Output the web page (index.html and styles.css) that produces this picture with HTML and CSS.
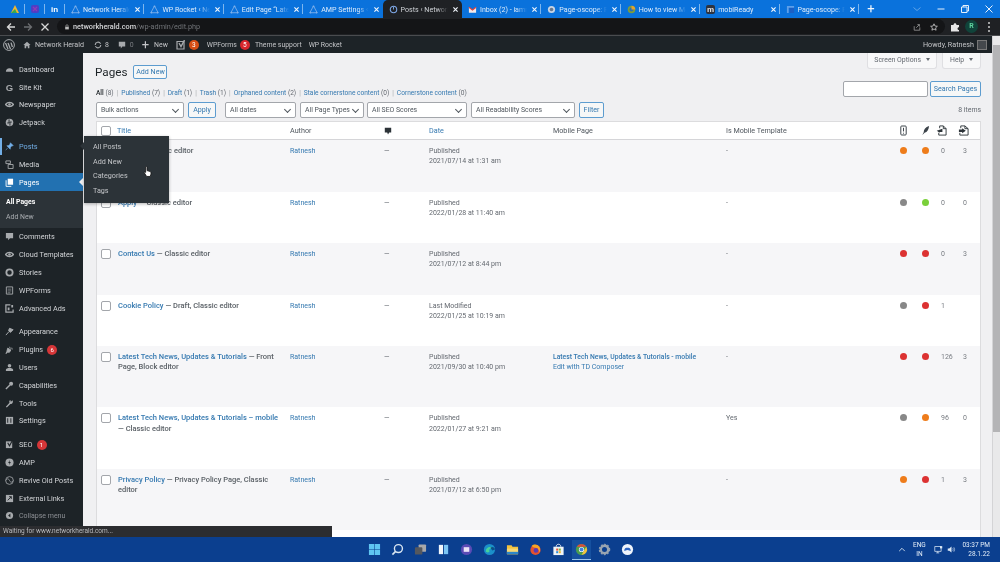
FILE: index.html
```html
<!DOCTYPE html>
<html lang="en">
<head>
<meta charset="utf-8">
<title>Pages</title>
<link rel="stylesheet" href="styles.css">
</head>
<body>
<svg class="defs" width="0" height="0" aria-hidden="true">
  <symbol id="tri" viewBox="0 0 10 10"><path d="M5 1 9 8.6H1Z" fill="none" stroke="currentColor" stroke-width="1"/><circle cx="5" cy="1.5" r="1" fill="currentColor"/><circle cx="1.5" cy="8.4" r="1" fill="currentColor"/><circle cx="8.5" cy="8.4" r="1" fill="currentColor"/></symbol>
  <symbol id="x" viewBox="0 0 10 10"><path d="M2 2 8 8M8 2 2 8" stroke="currentColor" stroke-width="1.6" fill="none"/></symbol>
</svg>
<div class="screen">
  <div class="tabs">
    <div class="pin"><svg viewBox="0 0 10 10"><path d="M5 1 9 9H1Z" fill="#f2b632"/><path d="M1 9 5 5 7 9Z" fill="#34a853"/></svg></div>
    <div class="pin"><svg viewBox="0 0 10 10"><rect x="1" y="1" width="8" height="8" rx="2" fill="#4d3fc4"/><path d="M3 3 7 7M7 3 3 7" stroke="#8e3bb8" stroke-width="1.4"/></svg></div>
    <div class="pin"><span class="in">in</span></div>
    <div class="tab"><svg class="fav"><use href="#tri"/></svg><span class="tab-t">Network Herald</span><svg class="cl"><use href="#x"/></svg></div>
    <div class="tab"><svg class="fav"><use href="#tri"/></svg><span class="tab-t">WP Rocket ‹ Net</span><svg class="cl"><use href="#x"/></svg></div>
    <div class="tab"><svg class="fav"><use href="#tri"/></svg><span class="tab-t">Edit Page “Late</span><svg class="cl"><use href="#x"/></svg></div>
    <div class="tab no-sep"><svg class="fav"><use href="#tri"/></svg><span class="tab-t">AMP Settings ‹</span><svg class="cl"><use href="#x"/></svg></div>
    <div class="tab active"><svg class="fav" viewBox="0 0 10 10"><circle cx="5" cy="5" r="3.6" fill="none" stroke="#7fa9e8" stroke-width="1.2"/><path d="M5 2V5" stroke="#7fa9e8"/></svg><span class="tab-t">Posts ‹ Network</span><svg class="cl"><use href="#x"/></svg></div>
    <div class="tab"><svg class="fav" viewBox="0 0 10 10"><path d="M1 2.5V8.5H9V2.5L5 5.5Z" fill="#f3e9e9"/><path d="M1 2.5 5 5.5 9 2.5" fill="none" stroke="#e0433a" stroke-width="1.3"/></svg><span class="tab-t">Inbox (2) - iamr</span><svg class="cl"><use href="#x"/></svg></div>
    <div class="tab"><svg class="fav" viewBox="0 0 10 10"><circle cx="5" cy="5" r="4" fill="#c8d4e4"/><circle cx="5" cy="5" r="2" fill="#66788f"/></svg><span class="tab-t">Page-oscope: Pr</span><svg class="cl"><use href="#x"/></svg></div>
    <div class="tab"><svg class="fav" viewBox="0 0 10 10"><circle cx="5" cy="5" r="4.2" fill="#7d9c3c"/><circle cx="5" cy="5" r="2.2" fill="#2f6fb3"/><path d="M5 .8A4.2 4.2 0 0 1 9.2 5H5Z" fill="#e2a32f"/></svg><span class="tab-t">How to view Mo</span><svg class="cl"><use href="#x"/></svg></div>
    <div class="tab"><span class="fav m-fav">m</span><span class="tab-t plain">mobiReady</span><svg class="cl"><use href="#x"/></svg></div>
    <div class="tab"><svg class="fav" viewBox="0 0 10 10"><path d="M1 1H9V9H4V4H1Z" fill="#1b5fc4"/><path d="M1 1H9V3H3V9H1Z" fill="#5ea0ea"/></svg><span class="tab-t">Page-oscope: Pr</span><svg class="cl"><use href="#x"/></svg></div>
    <span class="plus">+</span>
    <div class="win">
      <svg viewBox="0 0 10 10" class="dim"><path d="M1.5 3.5 5 6.5 8.5 3.5" fill="none" stroke="currentColor"/></svg>
      <svg viewBox="0 0 10 10"><path d="M1.5 5H8.5" stroke="currentColor"/></svg>
      <svg viewBox="0 0 10 10"><path d="M1.5 3H7V8.5H1.5ZM3 3V1.5H8.5V7H7" fill="none" stroke="currentColor"/></svg>
      <svg viewBox="0 0 10 10"><path d="M1.5 1.5 8.5 8.5M8.5 1.5 1.5 8.5" stroke="currentColor"/></svg>
    </div>
  </div>

  <div class="toolbar">
    <svg class="nav" viewBox="0 0 10 10"><path d="M9 5H1.5M5 1.5 1.5 5 5 8.5" fill="none" stroke="#d8d8d8" stroke-width="1.3"/></svg>
    <svg class="nav" viewBox="0 0 10 10"><path d="M1 5H8.5M5 1.5 8.5 5 5 8.5" fill="none" stroke="#6b6d70" stroke-width="1.3"/></svg>
    <svg class="nav" viewBox="0 0 10 10"><path d="M1.5 1.5 8.5 8.5M8.5 1.5 1.5 8.5" stroke="#d8d8d8" stroke-width="1.3"/></svg>
    <div class="omni">
      <svg class="lock" viewBox="0 0 10 10"><rect x="2" y="4.5" width="6" height="4.5" fill="#bbb"/><path d="M3.2 4.5V3a1.8 1.8 0 0 1 3.6 0V4.5" fill="none" stroke="#bbb"/></svg>
      <span class="host">networkherald.com</span><span class="path">/wp-admin/edit.php</span>
      <span class="grow"></span>
      <svg class="omni-i" viewBox="0 0 10 10"><path d="M1.5 4V9H8.5V5.5M4 6 8 2M8 2H5.5M8 2V4.5" fill="none" stroke="#9a9a9a"/></svg>
      <svg class="omni-i" viewBox="0 0 10 10"><path d="M5 1 6.2 3.8 9.2 4.1 7 6.1 7.6 9 5 7.5 2.4 9 3 6.1.8 4.1 3.8 3.8Z" fill="none" stroke="#cfcfcf"/></svg>
    </div>
    <svg class="puzzle" viewBox="0 0 10 10"><path d="M1 3H3.5C3.5 .8 6.5 .8 6.5 3H9V5.2C7 5.2 7 8 9 8V9.5H1Z" fill="#e6e6e6"/></svg>
    <span class="avatar">R</span>
    <svg class="dots" viewBox="0 0 4 12"><circle cx="2" cy="2" r="1" fill="#ccc"/><circle cx="2" cy="6" r="1" fill="#ccc"/><circle cx="2" cy="10" r="1" fill="#ccc"/></svg>
  </div>

  <div class="window">
    <div class="page">
      <div class="adminbar">
        <svg class="ab-logo" viewBox="0 0 12 12"><circle cx="6" cy="6" r="5.4" fill="none" stroke="#a7aaad" stroke-width="1"/><path d="M2.5 4 5 10M5 4 7.5 10M8 3.6 9.4 8" stroke="#a7aaad" stroke-width="1.3" fill="none"/></svg>
        <svg class="ab-i" viewBox="0 0 10 10"><path d="M5 1 9.5 5H8V9H6V6.5H4V9H2V5H.5Z" fill="#a7aaad"/></svg>
        <span class="ab-t site">Network Herald</span>
        <svg class="ab-i upd" viewBox="0 0 10 10"><path d="M1.5 5A3.5 3.5 0 0 1 8.2 3.6M8.5 5A3.5 3.5 0 0 1 1.8 6.4" fill="none" stroke="#a7aaad" stroke-width="1.4"/></svg>
        <span class="ab-t num">8</span>
        <svg class="ab-i cm" viewBox="0 0 10 10"><path d="M1 1H9V7H5.5L3.5 9.3V7H1Z" fill="#a7aaad"/></svg>
        <span class="ab-t num2 dim-t">0</span>
        <span class="ab-plus">+</span>
        <span class="ab-t new">New</span>
        <svg class="ab-i yoast" viewBox="0 0 10 10"><path d="M1 1.5H8V9H1Z" fill="none" stroke="#a7aaad" stroke-width="1.2"/><path d="M3 3 5 6.5 8.5 0" fill="none" stroke="#a7aaad" stroke-width="1.4"/></svg>
        <span class="badge orange">3</span>
        <span class="ab-t wpf">WPForms</span>
        <span class="badge red">5</span>
        <span class="ab-t theme">Theme support</span>
        <span class="ab-t rocket">WP Rocket</span>
        <span class="grow"></span>
        <span class="ab-t howdy">Howdy, Ratnesh</span>
        <span class="ab-av"></span>
      </div>

      <div class="main">
        <nav class="side">
          <a class="mi"><svg viewBox="0 0 10 10"><path d="M1 7.500A4 4 0 1 1 9 7.500Z" fill="#a7aaad"/></svg>Dashboard</a>
          <a class="mi"><span class="gl">G</span>Site Kit</a>
          <a class="mi"><svg viewBox="0 0 10 10"><path d="M.5 5C3 2 7 2 9.500 5 7 8 3 8 .5 5Z" fill="none" stroke="#a7aaad" stroke-width="1.400"/><circle cx="5" cy="5" r="1.400" fill="#a7aaad"/></svg>Newspaper</a>
          <a class="mi"><svg viewBox="0 0 10 10"><circle cx="5" cy="5" r="4.200" fill="#a7aaad"/><path d="M4.500 1.500V5.500H2.500M5.500 8.500V4.500H7.500" stroke="#1d2327" fill="none"/></svg>Jetpack</a>

          <a class="mi sep cur"><svg viewBox="0 0 10 10"><path d="M6 .8 9.200 4 7.500 4.500 6 6 5.800 8 2 4.200 4 4 5.500 2.500ZM3 6.500 .8 9.200" fill="#72aee6" stroke="#72aee6" stroke-width=".6"/></svg>Posts</a>
          <a class="mi"><svg viewBox="0 0 10 10"><path d="M1 1H6V4H1ZM3.500 5H9V9.500H3.500Z" fill="none" stroke="#a7aaad"/></svg>Media</a>
          <a class="mi on"><svg viewBox="0 0 10 10"><path d="M3 .8H9V7.500H3Z" fill="#fff"/><path d="M1.200 2.500V9.300H7" fill="none" stroke="#fff"/></svg>Pages</a>
          <div class="sub"><a class="sub-on">All Pages</a><a>Add New</a></div>
          <a class="mi"><svg viewBox="0 0 10 10"><path d="M1 1H9V7H5.500L3.500 9.300V7H1Z" fill="#a7aaad"/></svg>Comments</a>
          <a class="mi"><svg viewBox="0 0 10 10"><path d="M.5 5C3 2 7 2 9.500 5 7 8 3 8 .5 5Z" fill="none" stroke="#a7aaad" stroke-width="1.400"/><circle cx="5" cy="5" r="1.400" fill="#a7aaad"/></svg>Cloud Templates</a>
          <a class="mi"><svg viewBox="0 0 10 10"><circle cx="5" cy="5" r="3.500" fill="none" stroke="#a7aaad" stroke-width="2"/></svg>Stories</a>
          <a class="mi"><svg viewBox="0 0 10 10"><path d="M1.500 1H8.500V9H1.500Z" fill="none" stroke="#a7aaad"/><path d="M3 3.500H7M3 5.500H7M3 7.500H6" stroke="#a7aaad" stroke-width=".7"/></svg>WPForms</a>
          <a class="mi"><svg viewBox="0 0 10 10"><path d="M6 1H1V9H9V6" fill="none" stroke="#a7aaad" stroke-width="1.400"/><path d="M7 1H9V4H7ZM3 4H5V7H3Z" fill="#a7aaad"/></svg>Advanced Ads</a>

          <a class="mi sep"><svg viewBox="0 0 10 10"><path d="M5 1.500 9 3 6 6 4 4ZM4.500 5 1 9" fill="#a7aaad" stroke="#a7aaad" stroke-width="1.100"/></svg>Appearance</a>
          <a class="mi"><svg viewBox="0 0 10 10"><path d="M3 3.500 6.500 5.500 5 8H3L1 9.500 2 7.500ZM5 2 6 4M7.500 3 8 5" fill="#a7aaad" stroke="#a7aaad"/></svg>Plugins <span class="count">6</span></a>
          <a class="mi"><svg viewBox="0 0 10 10"><circle cx="5" cy="3" r="2" fill="#a7aaad"/><path d="M1 9V7.500C1 6 3 5.500 5 5.500S9 6 9 7.500V9Z" fill="#a7aaad"/></svg>Users</a>
          <a class="mi"><svg viewBox="0 0 10 10"><circle cx="6.800" cy="3" r="2.200" fill="#a7aaad"/><path d="M5.500 4.500 1 9" stroke="#a7aaad" stroke-width="1.500"/></svg>Capabilities</a>
          <a class="mi"><svg viewBox="0 0 10 10"><path d="M8.500 1.500 6.500 3 6 1.200C4.500 2 4.500 3 5 4.200L1 8.500 2 9.500 6 5.500C8 6 9.500 4 8.500 1.500Z" fill="#a7aaad"/></svg>Tools</a>
          <a class="mi"><svg viewBox="0 0 10 10"><path d="M1 1H9V9H1Z" fill="#a7aaad"/><path d="M3 2.500V7.500M6.500 2.500V7.500" stroke="#1d2327"/></svg>Settings</a>

          <a class="mi sep"><svg viewBox="0 0 10 10"><path d="M1 1.500H8V9H1Z" fill="#a7aaad"/><path d="M3 3 5 6.500 8.500 0" fill="none" stroke="#1d2327" stroke-width="1.200"/></svg>SEO <span class="count">1</span></a>
          <a class="mi"><svg viewBox="0 0 10 10"><circle cx="5" cy="5" r="4.500" fill="#a7aaad"/><path d="M5.500 2 3.500 5.500H5L4.500 8 6.500 4.500H5Z" fill="#1d2327"/></svg>AMP</a>
          <a class="mi"><svg viewBox="0 0 10 10"><circle cx="5" cy="5" r="4.300" fill="none" stroke="#a7aaad" stroke-width=".9"/><path d="M1 5C2.500 2 4 3 5 5S7.500 8 9 5" fill="none" stroke="#a7aaad" stroke-width=".9"/></svg>Revive Old Posts</a>
          <a class="mi"><svg viewBox="0 0 10 10"><path d="M1 1H9V9H1Z" fill="#a7aaad"/><path d="M3 7 7 3M4.500 3H7V5.500" fill="none" stroke="#1d2327"/></svg>External Links</a>
          <a class="mi collapse"><svg viewBox="0 0 10 10"><circle cx="5" cy="5" r="4" fill="#a7aaad"/><path d="M6 2.800 3.500 5 6 7.200Z" fill="#1d2327"/></svg>Collapse menu</a>
        </nav>

        <main class="content">
          <div class="meta-tabs">
            <span class="meta-tab screen-opt">Screen Options <i class="tri-d"></i></span>
            <span class="meta-tab help">Help <i class="tri-d"></i></span>
          </div>
          <div class="head">
            <div class="head-l">
              <div class="title-row"><h1>Pages</h1><a class="btn add">Add New</a></div>
              <ul class="views">
                <li><b>All</b> <em>(8)</em></li><li><a>Published</a> <em>(7)</em></li><li><a>Draft</a> <em>(1)</em></li><li><a>Trash</a> <em>(1)</em></li><li><a>Orphaned content</a> <em>(2)</em></li><li><a>Stale cornerstone content</a> <em>(0)</em></li><li><a>Cornerstone content</a> <em>(0)</em></li>
              </ul>
              <div class="filters">
                <span class="sel w1">Bulk actions</span>
                <a class="btn apply">Apply</a>
                <span class="sel w2">All dates</span>
                <span class="sel w3">All Page Types</span>
                <span class="sel w4">All SEO Scores</span>
                <span class="sel w5">All Readability Scores</span>
                <a class="btn filter">Filter</a>
              </div>
            </div>
            <div class="head-r">
              <div class="search"><span class="search-in"></span><a class="btn search-b">Search Pages</a></div>
              <div class="items">8 items</div>
            </div>
          </div>

          <div class="table">
            <div class="row th">
              <span><i class="cb"></i></span>
              <a class="lnk tt">Title</a>
              <span>Author</span>
              <span><svg class="th-c" viewBox="0 0 10 10"><path d="M1 1H9V7H6.500L5 9.300 4 7H1Z" fill="#2c3338"/></svg></span>
              <a class="lnk">Date</a>
              <span>Mobile Page</span>
              <span>Is Mobile Template</span>
              <span class="ic"><svg viewBox="0 0 10 12"><rect x="2" y="1" width="6" height="10" rx="1" fill="none" stroke="#3c434a" stroke-width="1.100"/><path d="M5 3V7M5 8.500V9.500" stroke="#3c434a" stroke-width="1.100"/></svg></span>
              <span class="ic"><svg viewBox="0 0 10 12"><path d="M9 1C5 2 3 5 3 8L1.500 11 4 8.500C7 8 8.500 5 9 1Z" fill="#3c434a"/></svg></span>
              <span class="ic doc-a"><svg viewBox="0 0 12 12"><path d="M4 3.500V1H8L11 4V11H3V8.500M8 1V4H11" fill="none" stroke="#2c3338"/><path d="M7 5V4L.8 6.200 4 8.500V7.500H7Z" fill="#2c3338"/></svg></span>
              <span class="ic doc-b"><svg viewBox="0 0 12 12"><path d="M3 3.500V1H7.500L11 4V11H2V8.500M7.500 1V4H11" fill="none" stroke="#2c3338"/><path d="M1 4.800H4.500V3.500L8.500 6.300 4.500 9V7.500H1Z" fill="#2c3338"/></svg></span>
            </div>

            <div class="row alt h1r">
              <span><i class="cb"></i></span>
              <p class="t"><a class="lnk">About</a> — Classic editor</p>
              <a class="lnk">Ratnesh</a><span>—</span><p>Published<br>2021/07/14 at 1:31 am</p><span></span><span>-</span>
              <i class="d orange-d"></i><i class="d orange-d"></i><span class="n">0</span><span class="n">3</span>
            </div>
            <div class="row h1r">
              <span><i class="cb"></i></span>
              <p class="t"><a class="lnk">Apply</a> — Classic editor</p>
              <a class="lnk">Ratnesh</a><span>—</span><p>Published<br>2022/01/28 at 11:40 am</p><span></span><span>-</span>
              <i class="d gray-d"></i><i class="d green-d"></i><span class="n">0</span><span class="n">0</span>
            </div>
            <div class="row alt h1r">
              <span><i class="cb"></i></span>
              <p class="t"><a class="lnk">Contact Us</a> — Classic editor</p>
              <a class="lnk">Ratnesh</a><span>—</span><p>Published<br>2021/07/12 at 8:44 pm</p><span></span><span>-</span>
              <i class="d red-d"></i><i class="d red-d"></i><span class="n">0</span><span class="n">3</span>
            </div>
            <div class="row h1r">
              <span><i class="cb"></i></span>
              <p class="t"><a class="lnk">Cookie Policy</a> — Draft, Classic editor</p>
              <a class="lnk">Ratnesh</a><span>—</span><p>Last Modified<br>2022/01/25 at 10:19 am</p><span></span><span>-</span>
              <i class="d gray-d"></i><i class="d red-d"></i><span class="n">1</span><span class="n"></span>
            </div>
            <div class="row alt h2r">
              <span><i class="cb"></i></span>
              <p class="t"><a class="lnk">Latest Tech News, Updates &amp; Tutorials</a> — Front<br>Page, Block editor</p>
              <a class="lnk">Ratnesh</a><span>—</span><p>Published<br>2021/09/30 at 10:40 pm</p>
              <p><a class="lnk mob">Latest Tech News, Updates &amp; Tutorials - mobile</a><br><a class="lnk">Edit with TD Composer</a></p><span>-</span>
              <i class="d red-d"></i><i class="d red-d"></i><span class="n">126</span><span class="n">3</span>
            </div>
            <div class="row h2r">
              <span><i class="cb"></i></span>
              <p class="t"><a class="lnk">Latest Tech News, Updates &amp; Tutorials – mobile</a><br>— Classic editor</p>
              <a class="lnk">Ratnesh</a><span>—</span><p>Published<br>2022/01/27 at 9:21 am</p><span></span><span>Yes</span>
              <i class="d gray-d"></i><i class="d orange-d"></i><span class="n">96</span><span class="n">0</span>
            </div>
            <div class="row alt h2r">
              <span><i class="cb"></i></span>
              <p class="t"><a class="lnk">Privacy Policy</a> — Privacy Policy Page, Classic<br>editor</p>
              <a class="lnk">Ratnesh</a><span>—</span><p>Published<br>2021/07/12 at 6:50 pm</p><span></span><span>-</span>
              <i class="d orange-d"></i><i class="d red-d"></i><span class="n">1</span><span class="n">3</span>
            </div>
            <div class="row h1r"></div>
          </div>
        </main>
      </div>
    </div>
    <div class="vbar"><i class="thumb"></i></div>

    <div class="flyout"><a>All Posts</a><a>Add New</a><a>Categories</a><a>Tags</a></div>
    <svg class="cursor" viewBox="0 0 10 13"><path d="M3 1.200C3.800 .5 4.500 1 4.500 2V5.500L8 6.500C9 7 9 8 8.800 9.500L8 12H4L1.500 8C1 7 2 6.500 3 7.500Z" fill="#fff" stroke="#111" stroke-width=".9"/></svg>
    <div class="status">Waiting for www.networkherald.com...</div>
  </div>

  <footer class="taskbar">
    <div class="tb-icons">
      <svg viewBox="0 0 14 14"><path d="M1 1H6.700V6.700H1ZM7.300 1H13V6.700H7.300ZM1 7.300H6.700V13H1ZM7.300 7.300H13V13H7.300Z" fill="#5fc6f2"/></svg>
      <svg viewBox="0 0 14 14"><circle cx="8" cy="6" r="4.300" fill="none" stroke="#d9e6f2" stroke-width="1.500"/><path d="M5 9 1.500 12.500" stroke="#d9e6f2" stroke-width="1.700"/></svg>
      <svg viewBox="0 0 14 14"><rect x="5" y="1.500" width="8" height="8" rx="1" fill="#a8a8aa"/><rect x="1" y="4.500" width="8" height="8" rx="1" fill="#55585e"/></svg>
      <svg viewBox="0 0 14 14"><rect x="2" y="2" width="4.500" height="10" fill="#f1f6fb"/><rect x="7.500" y="2" width="4.500" height="10" fill="#7cc5f4"/></svg>
      <svg viewBox="0 0 14 14"><circle cx="7" cy="7" r="6" fill="#5b4bb5"/><rect x="4" y="4.500" width="6" height="5" fill="#e9e2f7"/></svg>
      <svg viewBox="0 0 14 14"><circle cx="7" cy="7" r="6" fill="#1b8fc9"/><path d="M3 9C3 5 7 3 11 5.500 9 5.500 6 6 7 9.500 5 11 3.500 10 3 9Z" fill="#47d19a"/><path d="M8 5A3 3 0 0 1 13 7L10 8Z" fill="#0c4f88"/></svg>
      <svg viewBox="0 0 14 14"><path d="M1 2.500H6L7 4H13V12H1Z" fill="#f2c23e"/><path d="M1 6H13V12H1Z" fill="#f7d774"/><path d="M1 9.500H13V12H1Z" fill="#2d86c9"/></svg>
      <svg viewBox="0 0 14 14"><circle cx="7" cy="7.500" r="5.500" fill="#e5532d"/><path d="M3 3C5 1 9 1 11 4 12.500 6 12 9 11 10 11 7 9 5 7 5S4 5 3 3Z" fill="#f6a623"/><circle cx="7.500" cy="8" r="2.500" fill="#5b3bb5"/></svg>
      <svg viewBox="0 0 14 14"><path d="M1.500 4H12.500V13H1.500Z" fill="#eef3f7"/><path d="M4.500 4C4.500 .5 9.500 .5 9.500 4" fill="none" stroke="#eef3f7"/><rect x="4.500" y="6" width="2.200" height="2.200" fill="#e8573a"/><rect x="7.300" y="6" width="2.200" height="2.200" fill="#7cb93c"/><rect x="4.500" y="8.800" width="2.200" height="2.200" fill="#2f8fd8"/><rect x="7.300" y="8.800" width="2.200" height="2.200" fill="#f2b632"/></svg>
      <span class="tb-chrome"><svg viewBox="0 0 14 14"><circle cx="7" cy="7" r="6" fill="#4b9e4e"/><path d="M7 1A6 6 0 0 1 12.200 4H7Z" fill="#e3483a"/><path d="M1.800 4A6 6 0 0 1 7 1V4Z" fill="#e3483a"/><path d="M12.200 4A6 6 0 0 1 7 13L9.500 8.500Z" fill="#f2c23e"/><circle cx="7" cy="7" r="2.800" fill="#fff"/><circle cx="7" cy="7" r="2.100" fill="#3f83e0"/></svg></span>
      <svg viewBox="0 0 14 14"><circle cx="7" cy="7" r="4" fill="none" stroke="#9aa5b1" stroke-width="2.600"/><circle cx="7" cy="7" r="5.600" fill="none" stroke="#9aa5b1" stroke-width="1.200" stroke-dasharray="2 1.600"/></svg>
      <svg viewBox="0 0 14 14"><circle cx="7" cy="7" r="6" fill="#eef4fb"/><path d="M3.500 8.500C3.500 5.500 5 5 7 5S10.500 5.500 10.500 8.500C9 8.500 9 7.500 7 7.500S5 8.500 3.500 8.500Z" fill="#2b63c2"/></svg>
    </div>
    <div class="tray">
      <svg class="caret" viewBox="0 0 10 6"><path d="M1.500 5 5 1.500 8.500 5" fill="none" stroke="#d8e6f3" stroke-width="1.100"/></svg>
      <div class="lang">ENG<br>IN</div>
      <svg class="tr-i" viewBox="0 0 12 12"><path d="M1 2H9.500V8.500H1ZM5 8.500V10.500M3 10.500H7" fill="none" stroke="#dbe8f5"/><path d="M8 1.500H11V4.500H8Z" fill="#dbe8f5"/></svg>
      <svg class="tr-i" viewBox="0 0 12 12"><path d="M1 4.500H3L6 2V10L3 7.500H1Z" fill="#dbe8f5"/><path d="M7.500 4C8.500 5 8.500 7 7.500 8M9 3C10.500 4.500 10.500 7.500 9 9" fill="none" stroke="#dbe8f5" stroke-width=".8"/></svg>
      <div class="clock">03:37 PM<br>28.1.22</div>
    </div>
  </footer>
</div>
</body>
</html>
```

FILE: styles.css
```css
* { box-sizing: border-box; }
html, body { margin: 0; padding: 0; }
body { width: 1000px; height: 562px; overflow: hidden; background: #0b3f8f; font-family: Roboto, "Open Sans", sans-serif; font-size: 7px; color: #646970; }
.defs { position: absolute; }
a { color: inherit; text-decoration: none; }
p, ul, h1 { margin: 0; padding: 0; }
i, em { font-style: normal; }
.grow { flex: 1; }
.screen { width: 1000px; height: 562px; display: flex; flex-direction: column; filter: blur(.4px); }

/* browser tabs */
.tabs { height: 18px; flex: none; background: #0a72dc; display: flex; align-items: center; padding-left: 5px; color: #dcebfb; }
.pin { width: 20px; height: 10px; display: flex; justify-content: center; align-items: center; border-right: 1px solid #7db6ee; }
.pin svg { width: 10px; height: 10px; }
.in { font: bold 8px "Liberation Sans", sans-serif; color: #fff; }
.tab { width: 79.400px; height: 18px; flex: none; display: flex; align-items: center; padding: 0 3px 0 6px; gap: 3px; position: relative; }
.tab::after { content: ""; position: absolute; right: 0; top: 4px; height: 10px; border-right: 1px solid #7db6ee; }
.tab.no-sep::after, .tab.active::after { display: none; }
.tab.active { background: #1f2124; border-radius: 5px 5px 0 0; color: #cfd2d6; }
.fav { width: 9px; height: 9px; flex: none; color: #7fb0ea; }
.m-fav { background: #2d3340; color: #e7e7e7; font: bold 8px/9px "Liberation Sans", sans-serif; text-align: center; border-radius: 2px; }
.tab-t { flex: 1; min-width: 0; white-space: nowrap; font-size: 7.100px; -webkit-mask-image: linear-gradient(90deg, #000 75%, transparent 98%); mask-image: linear-gradient(90deg, #000 75%, transparent 98%); }
.tab-t.plain { -webkit-mask-image: none; mask-image: none; }
.cl { width: 7px; height: 7px; flex: none; color: #f2f7fd; }
.plus { width: 24px; text-align: center; font-size: 13px; line-height: 18px; color: #f2f7fd; }
.win { margin-left: auto; display: flex; gap: 14px; padding-right: 6px; color: #e6f0fb; align-items: center; }
.win svg { width: 10px; height: 10px; }
.win .dim { color: #5ea4ea; }

/* toolbar */
.toolbar { height: 18px; flex: none; background: #1f2124; border-bottom: 1px solid #4a4c4f; display: flex; align-items: center; padding-left: 6px; }
.nav { width: 10px; height: 10px; margin-right: 7px; flex: none; }
.omni { width: 888px; height: 15px; flex: none; background: #141517; border-radius: 8px; display: flex; align-items: center; padding: 0 7px 0 7px; }
.lock { width: 6px; height: 6px; margin-right: 3px; }
.host { color: #d5d6d8; font-size: 7.300px; font-weight: 500; }
.path { color: #6f7276; font-size: 7.300px; }
.omni-i { width: 8px; height: 8px; margin-left: 9px; }
.puzzle { width: 10px; height: 10px; margin-left: 5px; }
.avatar { width: 13px; height: 13px; margin-left: 5px; border-radius: 50%; background: #10433a; color: #5fd39e; font-size: 7px; font-weight: 700; text-align: center; line-height: 13px; }
.dots { width: 4px; height: 12px; margin-left: 9px; }

/* window */
.window { flex: 1; min-height: 0; display: flex; position: relative; overflow: hidden; background: #f0f0f2; }
.page { flex: 1; min-width: 0; display: flex; flex-direction: column; }
.vbar { width: 8px; flex: none; background: #e9e9ea; padding-top: 9px; border-left: 1px solid #d4d4d6; }
.thumb { display: block; height: 387px; background: #b4b4b6; }

/* admin bar */
.adminbar { height: 17px; flex: none; background: #1d2327; display: flex; align-items: center; padding: 0 5px 0 3px; color: #c3c4c7; }
.ab-logo { width: 12px; height: 12px; margin-right: 8px; }
.ab-i { width: 8px; height: 8px; flex: none; }
.ab-t { white-space: nowrap; font-size: 6.900px; }
.site { margin-left: 4px; font-size: 7.100px; }
.upd { margin-left: 10px; }
.num { margin-left: 3px; }
.num2 { margin-left: 4px; }
.dim-t { color: #7c7f83; }
.cm { margin-left: 9px; }
.ab-plus { margin-left: 8px; font-size: 13px; line-height: 1; color: #c3c4c7; }
.new { margin-left: 5px; }
.yoast { margin-left: 8px; width: 10px; height: 10px; }
.badge { width: 10px; height: 10px; margin-left: 3px; border-radius: 50%; color: #fff; text-align: center; line-height: 10px; font-size: 6.500px; }
.badge.orange { background: #d64e14; }
.badge.red { background: #d8262c; }
.wpf { margin-left: 8px; }
.theme { margin-left: 5px; }
.rocket { margin-left: 7px; }
.howdy { color: #c3c4c7; font-size: 7.200px; }
.ab-av { width: 10px; height: 10px; margin-left: 3px; background: #44484c; border: 1px solid #777; }

/* layout */
.main { flex: 1; min-height: 0; display: flex; overflow: hidden; }

/* sidebar */
.side { width: 83px; flex: none; background: #1d2327; padding-top: 7.500px; color: #d2d4d7; }
.mi { display: flex; align-items: center; height: 17.800px; padding-left: 5px; font-size: 7.300px; white-space: nowrap; gap: 5px; position: relative; }
.mi > svg, .gl { width: 9px; height: 9px; flex: none; }
.gl { font: bold 9.500px/9px "Liberation Sans", sans-serif; color: #a7aaad; text-align: center; }
.mi.sep { margin-top: 6px; }
.cur { color: #72aee6; box-shadow: inset 2px 0 #72aee6; }
.on { background: #2271b1; color: #fff; }
.on::after { content: ""; position: absolute; right: 0; top: 5px; border: 4px solid transparent; border-right-color: #f0f0f2; border-left-width: 0; }
.sub { background: #2c3338; height: 37px; padding: 4px 0 0 6px; }
.sub a { display: block; height: 15px; line-height: 15px; color: #a9adb1; font-size: 6.900px; }
.sub .sub-on { color: #fff; font-weight: 700; }
.collapse { color: #8c8f94; font-size: 7px; }
.count { margin-left: -1px; width: 10px; height: 10px; border-radius: 50%; background: #d63638; color: #fff; font-size: 6px; line-height: 10px; text-align: center; }

/* content */
.content { flex: 1; min-width: 0; padding: 0 11px 0 12px; }
.meta-tabs { display: flex; justify-content: flex-end; gap: 5px; height: 16px; }
.meta-tab { height: 16px; background: #f8f8f9; border: 1px solid #dfdfe2; border-top: 0; color: #646970; font-size: 6.900px; line-height: 14px; border-radius: 0 0 3px 3px; white-space: nowrap; text-align: center; }
.screen-opt { width: 70px; }
.help { width: 39px; }
.tri-d { display: inline-block; margin-left: 3px; border: 2.500px solid transparent; border-top: 3px solid #646970; border-bottom: 0; vertical-align: 1px; }
.head { display: flex; justify-content: space-between; height: 52px; }
.head-l { display: flex; flex-direction: column; }
.title-row { display: flex; align-items: center; height: 19px; margin-top: -7px; }
h1 { font-size: 11.700px; font-weight: 400; color: #1d2327; }
.btn { display: inline-block; height: 16px; line-height: 14px; border: 1px solid #5d9ccf; border-radius: 2px; background: #f6f7f7; color: #3579b0; text-align: center; font-size: 7.100px; white-space: nowrap; }
.add { height: 14px; line-height: 12px; width: 34px; margin-left: 6px; }
.views { list-style: none; display: flex; margin: 6.500px 0 0 1px; height: 10px; line-height: 10px; font-size: 6.600px; }
.views li { white-space: nowrap; }
.views li + li::before { content: "|"; color: #a7aaad; margin: 0 3px; }
.views a { color: #3579b0; }
.views b { color: #1d2327; font-weight: 500; }
.views em { color: #646970; }
.filters { display: flex; margin-top: 4px; margin-left: 1px; }
.sel { height: 16px; line-height: 14px; padding-left: 4px; background: #fff; border: 1px solid #a3a6ab; border-radius: 2px; color: #50575e; font-size: 6.900px; position: relative; white-space: nowrap; }
.sel::after { content: ""; position: absolute; right: 5px; top: 4.500px; width: 4px; height: 4px; border: solid #50575e; border-width: 0 1px 1px 0; transform: rotate(45deg); }
.w1 { width: 88px; }
.apply { width: 28px; margin-left: 4px; }
.w2 { width: 71px; margin-left: 9px; }
.w3 { width: 64px; margin-left: 4px; }
.w4 { width: 100px; margin-left: 3px; }
.w5 { width: 104px; margin-left: 4px; }
.filter { width: 25px; margin-left: 4px; }
.head-r { display: flex; flex-direction: column; align-items: flex-end; }
.search { display: flex; gap: 2px; margin-top: 12px; }
.search-in { width: 85px; height: 16px; background: #fff; border: 1px solid #a3a6ab; border-radius: 2px; }
.search-b { width: 51px; }
.items { margin-top: 9px; font-size: 6.900px; color: #646970; }

/* table */
.table { margin-left: 1px; border: 1px solid #dcdcde; border-bottom: 0; background: #fff; }
.row { display: grid; grid-template-columns: 20px 173px 94px 45px 124px 173px 171px 22px 22px 22px 1fr; align-items: start; padding-top: 6px; line-height: 10.200px; }
.row > * { min-width: 0; }
.th { height: 18px; padding-top: 4px; border-bottom: 1px solid #d5d5d8; color: #50575e; font-size: 7.200px; }
.h1r { height: 51.500px; }
.h2r { height: 61.300px; }
.alt { background: #f6f6f8; }
.cb { display: block; width: 10px; height: 10px; margin: 0 0 0 4px; background: #fff; border: 1px solid #a3a6ab; border-radius: 2px; }
.lnk { color: #3579b0; }
.tt { padding-left: 0; }
.mob { font-weight: 500; font-size: 6.800px; }
.t { font-size: 7.500px; font-weight: 500; padding-left: 1px; color: #5a6066; white-space: nowrap; }
.th-c { width: 8px; height: 8px; display: block; margin-top: 1px; }
.ic svg { width: 9px; height: 11px; display: block; margin: -1px 0 0 2px; }
.doc-a svg, .doc-b svg { width: 11px; }
.doc-a svg { margin-left: -5px; }
.doc-b svg { margin-left: -5px; }
.d { display: block; width: 7px; height: 7px; border-radius: 50%; margin: 1px 0 0 3px; }
.orange-d { background: #ee7c1b; }
.gray-d { background: #888; }
.red-d { background: #dc3232; }
.green-d { background: #7ad03a; }
.n { color: #787c82; }

/* overlays */
.flyout { position: absolute; left: 84px; top: 100px; width: 85px; height: 67px; padding: 4px 0 0 9px; background: #2c3338; color: #c3c5c8; font-size: 7.200px; box-shadow: 0 1px 3px rgba(0,0,0,.3); }
.flyout a { display: block; height: 14.600px; line-height: 14.600px; }
.flyout::before { content: ""; position: absolute; left: -4px; top: 6px; border: 4px solid transparent; border-right-color: #2c3338; border-left-width: 0; }
.cursor { position: absolute; left: 143px; top: 129px; width: 9px; height: 13px; }
.status { position: absolute; left: 0; bottom: 0; width: 332px; height: 11px; padding-left: 3px; background: #2c2d30; color: #b9babd; font-size: 6.500px; line-height: 11px; }

/* taskbar */
.taskbar { height: 25px; flex: none; background: #0b3f8f; display: flex; align-items: center; position: relative; color: #e4eef8; }
.tb-icons { margin-left: 367.500px; display: flex; align-items: center; gap: 10px; }
.tb-icons svg { width: 13px; height: 13px; display: block; }
.tb-chrome { padding: 3px; margin: 0 -3px; background: #16509f; border-bottom: 1px solid #9cc4ec; }
.tray { margin-left: auto; display: flex; align-items: center; padding-right: 10px; }
.caret { width: 8px; height: 5px; margin-right: 2px; }
.lang { width: 22px; font-size: 6.500px; line-height: 9px; text-align: center; margin-right: 4px; }
.tr-i { width: 9px; height: 9px; margin-right: 4px; }
.clock { margin-left: 2px; font-size: 6.500px; line-height: 9px; text-align: right; }
```
